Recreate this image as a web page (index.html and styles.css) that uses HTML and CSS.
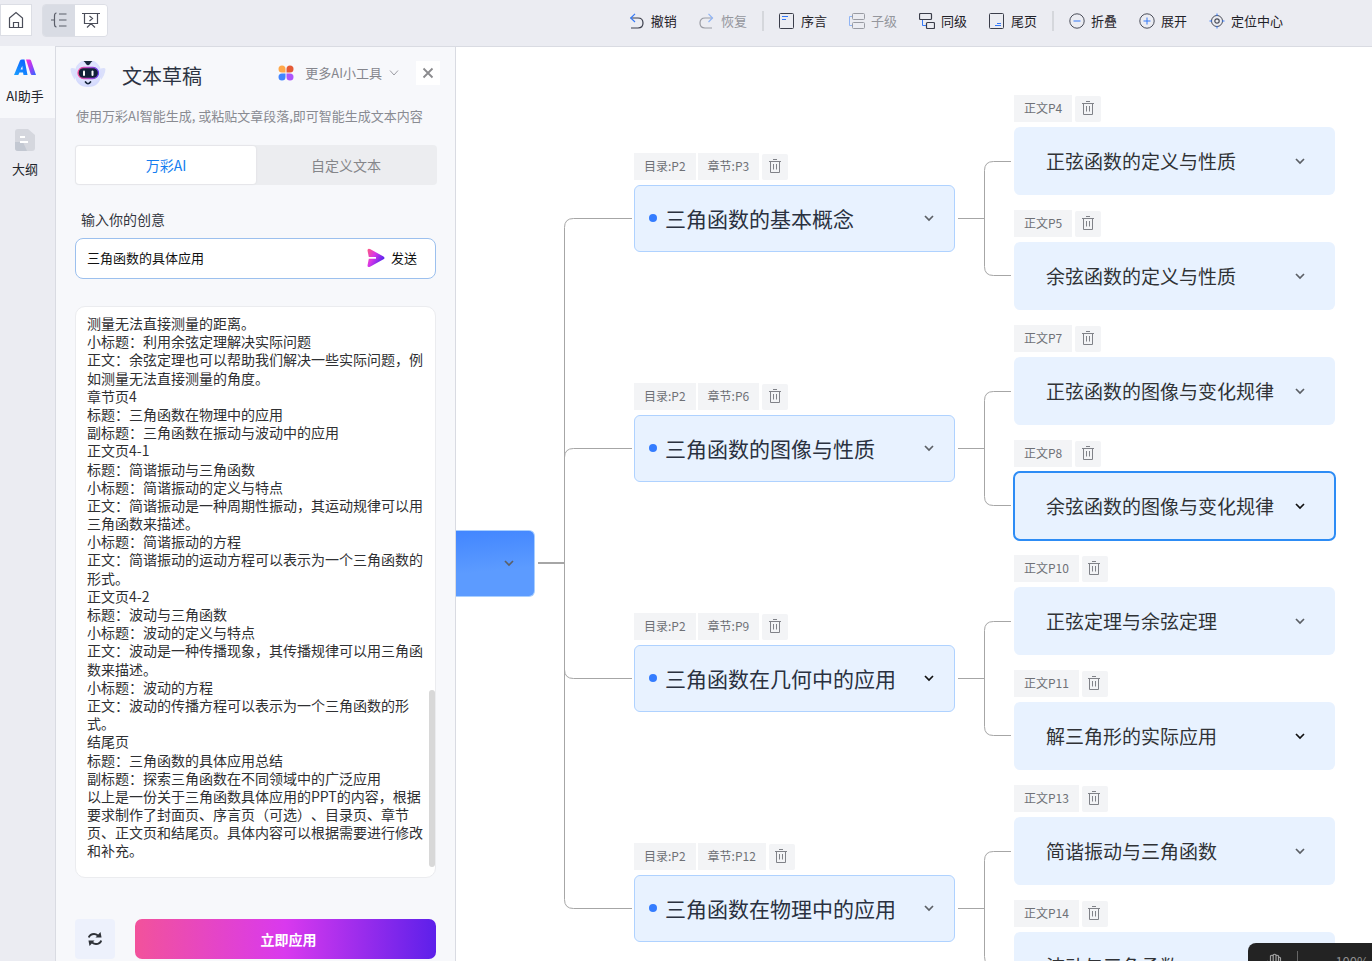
FILE: index.html
```html
<!DOCTYPE html>
<html lang="zh-CN">
<head>
<meta charset="utf-8">
<title>文本草稿</title>
<link rel="stylesheet" href="styles.css">
</head>
<body>
<svg class="sprite" aria-hidden="true">
  <symbol id="trash" viewBox="0 0 14 14"><path d="M1 2.500h12M5 .5h4M2.500 2.500v11h9v-11M5.500 5v5.500M8.500 5v5.500" fill="none" stroke="currentColor"/></symbol>
  <symbol id="chev" viewBox="0 0 12 12"><path d="M2 4l4 4 4-4" fill="none" stroke="currentColor" stroke-width="1.700"/></symbol>
  <symbol id="fork" viewBox="0 0 59 230"><path d="M3 123.500H29.500M56 66.500H38.500Q29.500 66.500 29.500 75.500V171.500Q29.500 180.500 38.500 180.500H56" fill="none" stroke="#a6a6a6"/></symbol>
</svg>
<div class="app">
  <header class="topbar">
    <button class="home" aria-label="主页"><svg width="16" height="18" viewBox="0 0 16 18"><path d="M1.500 7L8 1.500 14.500 7V16.500H1.500zM5.500 16.500V11.500H10.500V16.500" fill="none" stroke="#4a4d59" stroke-width="1.200"/></svg></button>
    <div class="views">
      <button class="view on" aria-label="导图"><svg width="18" height="16" viewBox="0 0 18 16"><path d="M1 8H5M6.500 1Q4.500 1 4.500 4V12Q4.500 15 6.500 15M9 2H16.500M9 8H16.500M9 14H16.500" fill="none" stroke="#5b5e69" stroke-width="1.200"/></svg></button>
      <button class="view" aria-label="演示"><svg width="18" height="16" viewBox="0 0 18 16"><path d="M0 1.500H18M2.500 1.500V11.500H15.500V1.500M7.500 4l3 2.500-3 2.500M5 15.500l3-3h2l3 3" fill="none" stroke="#4a4d59" stroke-width="1.200"/></svg></button>
    </div>
    <div class="tools">
      <button class="tool"><svg width="16" height="16" viewBox="0 0 16 16" fill="none"><path d="M1.500 5H9Q14 5 14 10T9 15H2" stroke="#3a3d4a" stroke-width="1.200"/><path d="M6 0.800L1.800 5 6 9" stroke="#3478f6" stroke-width="1.200"/></svg>撤销</button>
      <button class="tool off"><svg width="16" height="16" viewBox="0 0 16 16" fill="none"><path d="M13.500 5H6Q1 5 1 10T6 15H13" stroke="#999ba3" stroke-width="1.200"/><path d="M9.500 0.800L13.500 5 9.500 9" stroke="#8fb4f5" stroke-width="1.200"/></svg>恢复</button>
      <i class="sep"></i>
      <button class="tool"><svg width="16" height="16" viewBox="0 0 16 16" fill="none"><rect x=".5" y=".5" width="14" height="15" rx="1" stroke="#3a3d4a"/><path d="M3 3.500H9M3 6.500H7" stroke="#3478f6"/></svg>序言</button>
      <button class="tool off"><svg width="16" height="16" viewBox="0 0 16 16" fill="none"><rect x="3.500" y=".5" width="12" height="6" rx="1" stroke="#999ba3"/><rect x="3.500" y="9.500" width="12" height="6" rx="1" stroke="#999ba3"/><path d="M3 3.500H.5V12.500H3" stroke="#8fb4f5"/></svg>子级</button>
      <button class="tool"><svg width="16" height="16" viewBox="0 0 16 16" fill="none"><rect x=".5" y=".5" width="12" height="6" rx="1" stroke="#3a3d4a" stroke-width="1.200"/><rect x="7.500" y="9.500" width="8" height="6" rx="1" stroke="#3a3d4a" stroke-width="1.200"/><path d="M3.500 7V12.500H7" stroke="#3478f6"/></svg>同级</button>
      <button class="tool"><svg width="16" height="16" viewBox="0 0 16 16" fill="none"><rect x=".5" y=".5" width="14" height="15" rx="1" stroke="#3a3d4a"/><path d="M8 10.500H12M6 12.500H12" stroke="#3478f6"/></svg>尾页</button>
      <i class="sep"></i>
      <button class="tool"><svg width="16" height="16" viewBox="0 0 16 16" fill="none"><circle cx="8" cy="8" r="7.200" stroke="#4a4d59"/><path d="M4.500 8H11.500" stroke="#3478f6"/></svg>折叠</button>
      <button class="tool"><svg width="16" height="16" viewBox="0 0 16 16" fill="none"><circle cx="8" cy="8" r="7.200" stroke="#4a4d59"/><path d="M4.500 8H11.500M8 4.500V11.500" stroke="#3478f6"/></svg>展开</button>
      <button class="tool"><svg width="16" height="16" viewBox="0 0 16 16" fill="none"><circle cx="8" cy="8" r="5.500" stroke="#4a4d59"/><circle cx="8" cy="8" r="2.200" stroke="#4a4d59" stroke-width="1.200"/><path d="M8 .5V3M8 13V15.500M.5 8H3M13 8H15.500" stroke="#3478f6"/></svg>定位中心</button>
    </div>
  </header>
  <div class="body">
    <nav class="rail">
      <button class="rail-item on"><svg width="22" height="17" viewBox="0 0 22 17"><defs><linearGradient id="la" x1="0" y1="1" x2=".7" y2="0"><stop offset="0" stop-color="#1ca1ff"/><stop offset="1" stop-color="#0b62ff"/></linearGradient><linearGradient id="lb" x1="0" y1="0" x2="1" y2="1"><stop offset="0" stop-color="#ff2bd0"/><stop offset=".5" stop-color="#a33cf5"/><stop offset="1" stop-color="#2b6cff"/></linearGradient></defs><path d="M0 16L6 1.500Q6.600.5 8 .5H10.500L13.500 16H9.500L9 13.500H5.500L4.300 16zM6.500 10.500H8.700L8.300 7z" fill="url(#la)" fill-rule="evenodd"/><path d="M12 .5H15.500Q16.700.5 17 1.500L22 16H18Q17 16 16.500 14.500z" fill="url(#lb)"/></svg>AI助手</button>
      <button class="rail-item"><svg width="20" height="22" viewBox="0 0 20 22"><path d="M3 0H13L20 6V19Q20 22 17 22H3Q0 22 0 19V3Q0 0 3 0z" fill="#d5d7de"/><path d="M0 13H8L12 22H3Q0 22 0 19z" fill="#c3c8d2"/><path d="M5 8H10M5 13H13" stroke="#fff" stroke-width="2"/></svg>大纲</button>
    </nav>
    <aside class="panel">
      <div class="head">
        <svg width="36" height="30" viewBox="0 0 36 30"><defs><radialGradient id="rb" cx=".5" cy=".4" r=".6"><stop offset="0" stop-color="#eef0ff"/><stop offset="1" stop-color="#d3d9fd"/></radialGradient><linearGradient id="rv" x1="0" y1="0" x2="1" y2="0"><stop offset="0" stop-color="#ff4f9a"/><stop offset="1" stop-color="#6a40f0"/></linearGradient></defs><path d="M.5 11Q1 9.500 5 10.500V22Q1 17 .5 11zM35.500 11Q35 9.500 31 10.500V22Q35 17 35.500 11z" fill="#dbe0fb"/><path d="M12 3H24Q31.500 7 31.500 16Q30 29 18 29T4.500 16Q4.500 7 12 3z" fill="url(#rb)"/><path d="M13.500 3H22.500Q20.500 4.500 20 6Q18 8.500 16 6Q15.500 4.500 13.500 3z" fill="#16263b"/><rect x="8" y="9.500" width="20.500" height="11" rx="5.500" fill="#122138" stroke="url(#rv)" stroke-width="1.300"/><rect x="13" y="12.500" width="2" height="5.500" rx="1" fill="#fff"/><rect x="21.500" y="12.500" width="2" height="5.500" rx="1" fill="#fff"/><path d="M15.500 24Q18 27.500 20.500 24" fill="none" stroke="#16263b" stroke-width="1.700" stroke-linecap="round"/></svg>
        <h1>文本草稿</h1>
        <button class="more"><svg width="16" height="16" viewBox="0 0 16 16"><path d="M4 .5A3.500 3.500 0 0 1 7.500 4V7.500H4A3.500 3.500 0 0 1 4 .5z" fill="#ffa84a"/><path d="M12 .5A3.500 3.500 0 0 1 12 7.500H8.500V4A3.500 3.500 0 0 1 12 .5z" fill="#e45a36"/><path d="M4 8.500H7.500V12A3.500 3.500 0 1 1 4 8.500z" fill="#4285ff"/><path d="M8.500 8.500H12A3.500 3.500 0 1 1 8.500 12z" fill="#ad55fb"/></svg><span>更多AI小工具</span><svg class="thin" width="10" height="6" viewBox="0 0 10 6"><path d="M1 .5L5 5 9 .5" fill="none" stroke="#9b9ca3"/></svg></button>
        <button class="close" aria-label="关闭"><svg width="12" height="12" viewBox="0 0 12 12"><path d="M1.500 1.500l9 9M10.500 1.500l-9 9" stroke="#8b8b8e" stroke-width="1.800"/></svg></button>
      </div>
      <p class="hint">使用万彩AI智能生成, 或粘贴文章段落,即可智能生成文本内容</p>
      <div class="tabs" role="tablist">
        <button class="tab on" role="tab" aria-selected="true">万彩AI</button>
        <button class="tab" role="tab" aria-selected="false">自定义文本</button>
      </div>
      <label class="label" for="idea">输入你的创意</label>
      <div class="ask">
        <input id="idea" type="text" value="三角函数的具体应用">
        <button class="send"><svg width="18" height="20" viewBox="0 0 18 20"><defs><linearGradient id="sg" x1="0" y1="0" x2="1" y2=".6"><stop offset="0" stop-color="#ff5a7d"/><stop offset=".45" stop-color="#d936e8"/><stop offset="1" stop-color="#4a22ee"/></linearGradient></defs><path d="M.5 2.500Q.5 0 3 1L16.500 8.500Q18.500 10 16.500 11.200L3 18.800Q.5 19.800 .5 17.500L1.800 10.800H9V9H1.800z" fill="url(#sg)"/></svg>发送</button>
      </div>
      <div class="draft">
        <textarea aria-label="文本草稿" spellcheck="false">测量无法直接测量的距离。
小标题：利用余弦定理解决实际问题
正文：余弦定理也可以帮助我们解决一些实际问题，例如测量无法直接测量的角度。
章节页4
标题：三角函数在物理中的应用
副标题：三角函数在振动与波动中的应用
正文页4-1
标题：简谐振动与三角函数
小标题：简谐振动的定义与特点
正文：简谐振动是一种周期性振动，其运动规律可以用三角函数来描述。
小标题：简谐振动的方程
正文：简谐振动的运动方程可以表示为一个三角函数的形式。
正文页4-2
标题：波动与三角函数
小标题：波动的定义与特点
正文：波动是一种传播现象，其传播规律可以用三角函数来描述。
小标题：波动的方程
正文：波动的传播方程可以表示为一个三角函数的形式。
结尾页
标题：三角函数的具体应用总结
副标题：探索三角函数在不同领域中的广泛应用
以上是一份关于三角函数具体应用的PPT的内容，根据要求制作了封面页、序言页（可选）、目录页、章节页、正文页和结尾页。具体内容可以根据需要进行修改和补充。</textarea>
        <i class="thumb"></i>
      </div>
      <div class="foot">
        <button class="redo" aria-label="重新生成"><svg width="14" height="14" viewBox="0 0 14 14"><path d="M.8 5.500Q2 2 6 2Q8 2 10 3.500" fill="none" stroke="#2f3238" stroke-width="2"/><path d="M12.500 0L13.500 5.500 7.500 5.500z" fill="#2f3238"/><path d="M13.200 8.500Q12 12 8 12Q6 12 4 10.500" fill="none" stroke="#2f3238" stroke-width="2"/><path d="M1.500 14L.5 8.500 6.500 8.500z" fill="#2f3238"/></svg></button>
        <button class="apply">立即应用</button>
      </div>
    </aside>
    <main class="canvas">
      <div class="root"><button class="chev" aria-label="折叠"><svg width="12" height="12"><use href="#chev"/></svg></button></div>
      <svg class="trunk" width="99" height="914" viewBox="0 0 99 914"><g fill="none" stroke="#a6a6a6"><path d="M3 516H29.500" stroke-width="2"/><path d="M97 171.500H38.500Q29.500 171.500 29.500 180.500V852.500Q29.500 861.500 38.500 861.500H97M97 401.500H38.500Q29.500 401.500 29.500 410.500M97 631.500H38.500Q29.500 631.500 29.500 622.500"/></g></svg>
      <div class="groups">
        <section class="group">
          <div class="branch">
            <div class="tags"><span class="tag">目录:P2</span><span class="tag">章节:P3</span><button class="del" aria-label="删除"><svg width="14" height="14"><use href="#trash"/></svg></button></div>
            <div class="card"><i class="dot"></i><span>三角函数的基本概念</span><button class="chev" aria-label="折叠"><svg width="12" height="12"><use href="#chev"/></svg></button></div>
          </div>
          <svg class="fork" width="59" height="230"><use href="#fork"/></svg>
          <div class="leaves">
            <div class="leaf">
              <div class="tags"><span class="tag">正文P4</span><button class="del" aria-label="删除"><svg width="14" height="14"><use href="#trash"/></svg></button></div>
              <div class="card"><span>正弦函数的定义与性质</span><button class="chev" aria-label="折叠"><svg width="12" height="12"><use href="#chev"/></svg></button></div>
            </div>
            <div class="leaf">
              <div class="tags"><span class="tag">正文P5</span><button class="del" aria-label="删除"><svg width="14" height="14"><use href="#trash"/></svg></button></div>
              <div class="card"><span>余弦函数的定义与性质</span><button class="chev" aria-label="折叠"><svg width="12" height="12"><use href="#chev"/></svg></button></div>
            </div>
          </div>
        </section>
        <section class="group">
          <div class="branch">
            <div class="tags"><span class="tag">目录:P2</span><span class="tag">章节:P6</span><button class="del" aria-label="删除"><svg width="14" height="14"><use href="#trash"/></svg></button></div>
            <div class="card"><i class="dot"></i><span>三角函数的图像与性质</span><button class="chev" aria-label="折叠"><svg width="12" height="12"><use href="#chev"/></svg></button></div>
          </div>
          <svg class="fork" width="59" height="230"><use href="#fork"/></svg>
          <div class="leaves">
            <div class="leaf">
              <div class="tags"><span class="tag">正文P7</span><button class="del" aria-label="删除"><svg width="14" height="14"><use href="#trash"/></svg></button></div>
              <div class="card"><span>正弦函数的图像与变化规律</span><button class="chev" aria-label="折叠"><svg width="12" height="12"><use href="#chev"/></svg></button></div>
            </div>
            <div class="leaf">
              <div class="tags"><span class="tag">正文P8</span><button class="del" aria-label="删除"><svg width="14" height="14"><use href="#trash"/></svg></button></div>
              <div class="card selected"><span>余弦函数的图像与变化规律</span><button class="chev dark" aria-label="折叠"><svg width="12" height="12"><use href="#chev"/></svg></button></div>
            </div>
          </div>
        </section>
        <section class="group">
          <div class="branch">
            <div class="tags"><span class="tag">目录:P2</span><span class="tag">章节:P9</span><button class="del" aria-label="删除"><svg width="14" height="14"><use href="#trash"/></svg></button></div>
            <div class="card"><i class="dot"></i><span>三角函数在几何中的应用</span><button class="chev dark" aria-label="折叠"><svg width="12" height="12"><use href="#chev"/></svg></button></div>
          </div>
          <svg class="fork" width="59" height="230"><use href="#fork"/></svg>
          <div class="leaves">
            <div class="leaf">
              <div class="tags"><span class="tag">正文P10</span><button class="del" aria-label="删除"><svg width="14" height="14"><use href="#trash"/></svg></button></div>
              <div class="card"><span>正弦定理与余弦定理</span><button class="chev" aria-label="折叠"><svg width="12" height="12"><use href="#chev"/></svg></button></div>
            </div>
            <div class="leaf">
              <div class="tags"><span class="tag">正文P11</span><button class="del" aria-label="删除"><svg width="14" height="14"><use href="#trash"/></svg></button></div>
              <div class="card"><span>解三角形的实际应用</span><button class="chev dark" aria-label="折叠"><svg width="12" height="12"><use href="#chev"/></svg></button></div>
            </div>
          </div>
        </section>
        <section class="group">
          <div class="branch">
            <div class="tags"><span class="tag">目录:P2</span><span class="tag">章节:P12</span><button class="del" aria-label="删除"><svg width="14" height="14"><use href="#trash"/></svg></button></div>
            <div class="card"><i class="dot"></i><span>三角函数在物理中的应用</span><button class="chev" aria-label="折叠"><svg width="12" height="12"><use href="#chev"/></svg></button></div>
          </div>
          <svg class="fork" width="59" height="230"><use href="#fork"/></svg>
          <div class="leaves">
            <div class="leaf">
              <div class="tags"><span class="tag">正文P13</span><button class="del" aria-label="删除"><svg width="14" height="14"><use href="#trash"/></svg></button></div>
              <div class="card"><span>简谐振动与三角函数</span><button class="chev" aria-label="折叠"><svg width="12" height="12"><use href="#chev"/></svg></button></div>
            </div>
            <div class="leaf">
              <div class="tags"><span class="tag">正文P14</span><button class="del" aria-label="删除"><svg width="14" height="14"><use href="#trash"/></svg></button></div>
              <div class="card"><span>波动与三角函数</span><button class="chev" aria-label="折叠"><svg width="12" height="12"><use href="#chev"/></svg></button></div>
            </div>
          </div>
        </section>
      </div>
      <div class="zoombar">
        <svg width="16" height="18" viewBox="0 0 16 18"><path d="M4.500 11L2 8.500Q.5 8 1 10L4.500 16H12L14.500 10V5Q13.500 3.500 12.500 5V9M12.500 8V3Q11 1.500 10 3V8M10 8V2Q8.500.5 7.200 2V8M7.200 8V3Q5.800 1.500 4.500 3V11" fill="none" stroke="#a2a2a2" stroke-width="1.200"/></svg>
        <i class="bar"></i>
        <span>100%</span>
      </div>
    </main>
  </div>
</div>
</body>
</html>
```
FILE: styles.css
```css
* { box-sizing: border-box; }
html, body { height: 100%; }
body {
  margin: 0;
  overflow: hidden;
  font-family: "Noto Sans CJK SC", "Noto Sans", sans-serif;
  font-size: 13px;
  line-height: 20px;
  color: #333a45;
}
button, input, textarea { font: inherit; color: inherit; }
button { border: 0; padding: 0; background: none; cursor: pointer; }
svg { display: block; flex-shrink: 0; }
.sprite { position: absolute; width: 0; height: 0; }
.app { display: flex; flex-direction: column; height: 100vh; background: #ebecf2; }

.topbar { display: flex; align-items: center; flex-shrink: 0; height: 46px; padding: 0 89px 6px 0; }
.home { display: flex; align-items: center; justify-content: center; width: 32px; height: 32px; background: #fff; border: 1px solid #dcdee5; }
.views { display: flex; margin-left: 10px; border: 1px solid #dcdee5; border-radius: 4px; overflow: hidden; }
.view { display: flex; align-items: center; justify-content: center; width: 32px; height: 31px; background: #fff; }
.view.on { background: #d9dce4; }
.tools { display: flex; align-items: center; gap: 22px; margin-left: auto; padding-top: 1px; }
.tool { display: flex; align-items: center; gap: 6px; color: #1f2128; white-space: nowrap; }
.tool.off { color: #94969d; }
.sep { width: 2px; height: 20px; margin: 0 -7px; background: #d5d7dc; }

.body { display: flex; flex: 1; min-height: 0; }
.rail { display: flex; flex-direction: column; flex-shrink: 0; width: 55px; }
.rail-item { display: flex; flex-direction: column; align-items: center; justify-content: center; gap: 8px; height: 72px; padding-right: 5px; color: #23252c; }
.rail-item.on { gap: 10px; background: #f7f8fb; }

.panel { display: flex; flex-direction: column; flex-shrink: 0; width: 401px; padding: 14px 18px 2px 19px; background: #f7f8fb; border: 1px solid #d9dbe2; border-bottom: 0; }
.head { display: flex; align-items: center; height: 24px; margin: 0 -3px 0 -5px; }
h1 { margin: 6px 0 0 16px; font-size: 20px; line-height: 24px; font-weight: 400; color: #2d3442; }
.more { display: flex; align-items: center; gap: 11px; margin-left: auto; color: #85868d; }
.more .thin { margin-left: -4px; }
.close { display: flex; align-items: center; justify-content: center; width: 24px; height: 24px; margin-left: 17px; background: #fff; }
.hint { margin: 21px 0 0 1px; color: #898b92; white-space: nowrap; }
.tabs { display: flex; margin-top: 19px; padding: 1px; background: #ecedf0; border-radius: 4px; }
.tab { flex: 1; height: 38px; font-size: 14px; color: #85868a; border-radius: 3px; }
.tab.on { color: #147df0; background: #fff; box-shadow: 0 0 2px #d5d6da; }
.label { margin: 24px 0 0 6px; font-size: 14px; color: #33363e; }
.ask { display: flex; align-items: center; height: 41px; margin: 9px 1px 0 0; padding: 0 18px 1px 11px; background: #fff; border: 1px solid #9cc0ee; border-radius: 8px; }
.ask input { flex: 1; min-width: 0; padding: 0; color: #111; background: none; border: 0; outline: 0; }
.send { display: flex; align-items: center; gap: 6px; color: #111; }
.draft { position: relative; flex: 1; display: flex; min-height: 0; margin: 27px 1px 0 0; background: #fff; border: 1px solid #ebecef; border-radius: 10px; overflow: hidden; }
.draft textarea { flex: 1; min-width: 0; padding: 7px 5px 7px 11px; font-size: 14px; line-height: 1.3; color: #2f3033; background: none; border: 0; outline: 0; resize: none; overflow: hidden; text-spacing-trim: space-all; }
.thumb { position: absolute; right: 0; bottom: 10px; width: 6px; height: 31%; background: #d8d8d8; border-radius: 3px; }
.foot { display: flex; gap: 20px; margin: 41px 1px 0 0; }
.redo { display: flex; align-items: center; justify-content: center; width: 40px; height: 40px; background: #edf1fc; border-radius: 4px; }
.apply { flex: 1; height: 40px; padding: 0 0 1px 6px; font-size: 14px; font-weight: 700; color: #fff; background: linear-gradient(90deg, #f2529b, #d939ee 50%, #5d20ea); border-radius: 7px; }

.canvas { position: relative; flex: 1; display: flex; min-width: 0; overflow: hidden; background: #fff; border-top: 1px solid #d9dbe2; }
.root { display: flex; align-items: center; justify-content: flex-end; flex-shrink: 0; width: 79px; height: 67px; margin-top: 483px; padding: 0 19px 2px 0; background: linear-gradient(175deg, #4286ff, #5c9bff 60%); border: 1px solid #a9cfff; border-left: 0; border-radius: 0 6px 6px 0; }
.groups { flex-shrink: 0; padding-top: 48px; }
.group { display: flex; height: 230px; }
.branch { width: 321px; padding-top: 58px; }
.leaves { width: 321px; }
.leaf { height: 115px; }
.tags { display: flex; align-items: center; gap: 2px; height: 27px; margin-bottom: 5px; font-size: 12px; color: #6f7176; }
.tag { height: 27px; padding: 0 10px; line-height: 25px; background: #f3f4f6; white-space: nowrap; }
.del { display: flex; align-items: center; justify-content: center; width: 26px; height: 26px; margin-left: 1px; padding: 0 1px 1px 0; color: #808288; background: #f3f4f6; border-radius: 2px; }
.card { display: flex; align-items: center; height: 68px; padding: 0 29px 0 32px; font-size: 19px; line-height: 28px; color: #303236; background: #e8f2ff; border-radius: 6px; white-space: nowrap; }
.branch .card { height: 67px; padding: 0 19px 1px 14px; font-size: 21px; color: #2a3140; border: 1px solid #afd2ff; }
.card.selected { outline: 2px solid #2d8cf5; outline-offset: -1px; }
.dot { width: 8px; height: 8px; margin-right: 8px; background: #347cff; border-radius: 50%; }
.chev { margin-left: auto; color: #5c6066; }
.chev.dark { color: #111; }
.zoombar { position: absolute; right: 0; bottom: -20px; display: flex; align-items: center; width: 124px; height: 38px; padding: 0 3px 0 18px; font-size: 13px; color: #8e8e8e; background: #232323; border-radius: 8px 0 0 0; }
.zoombar .bar { width: 1px; height: 22px; margin-left: 15px; background: #666; }
.zoombar span { margin-left: auto; }
```
